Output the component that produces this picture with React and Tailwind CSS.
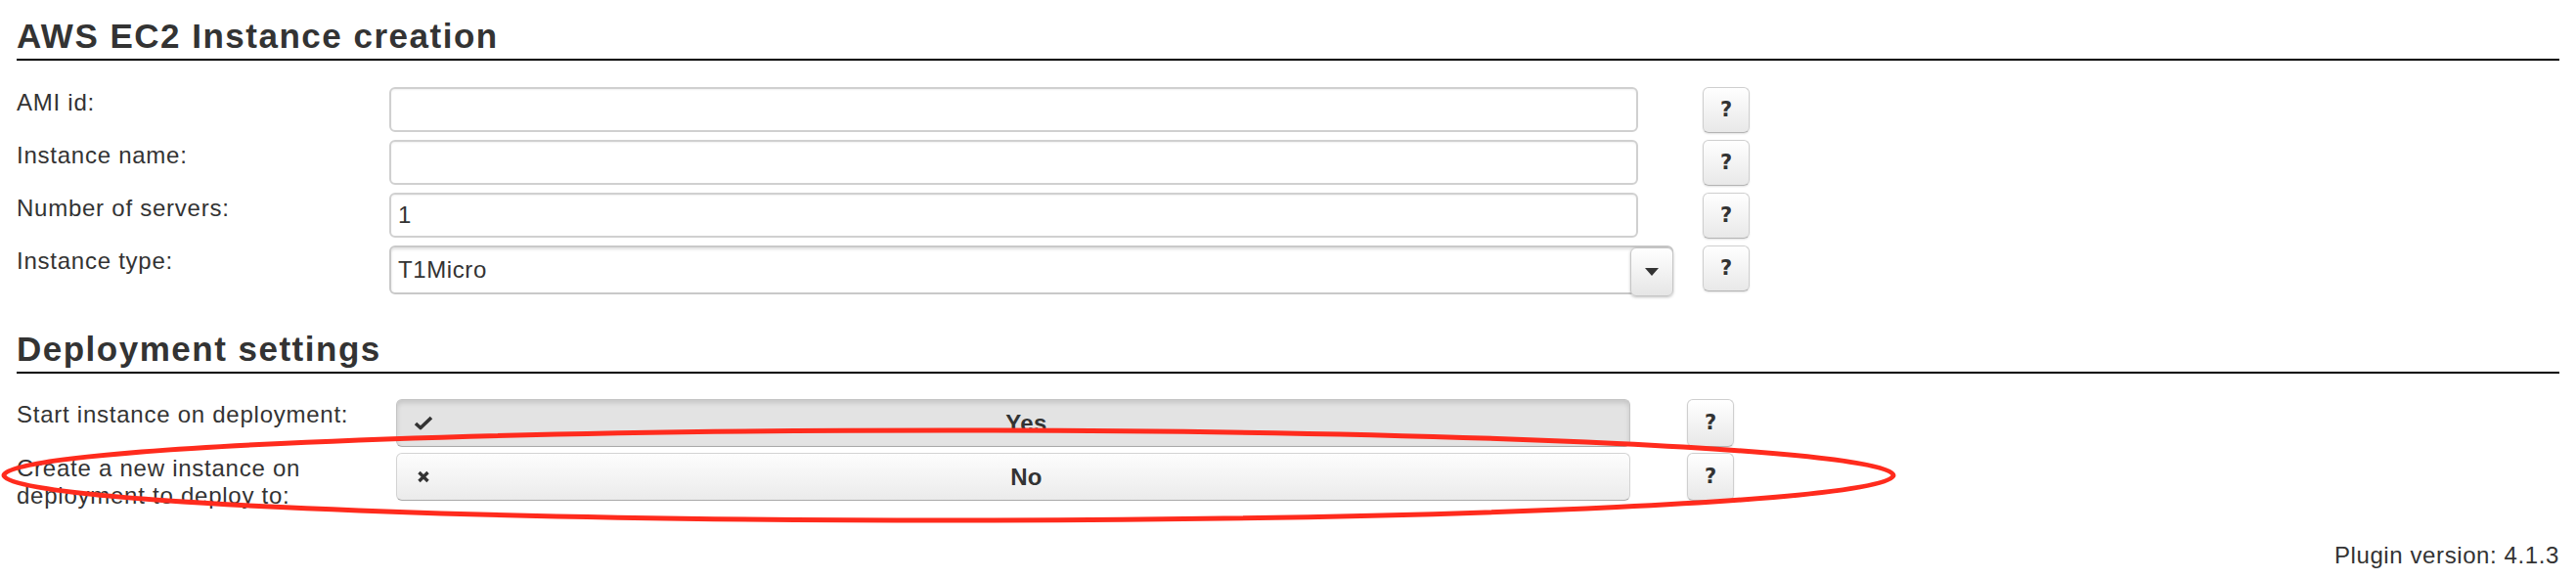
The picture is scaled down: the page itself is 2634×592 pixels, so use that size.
import React from 'react';

const HelpButton = ({ tall }) => (
  <button
    type="button"
    className={`${tall ? 'h-[49px]' : 'h-[47px]'} w-[48px] shrink-0 rounded-[6px] border border-[#cfcfcf] border-b-[#b4b4b4] bg-linear-to-b from-white to-[#e8e8e8] shadow-[0_1px_2px_rgba(0,0,0,0.12)] font-['DejaVu_Sans',sans-serif] text-[21px] font-bold leading-none text-[#333]`}
  >
    ?
  </button>
);

const TextField = ({ value }) => (
  <input
    type="text"
    defaultValue={value}
    className="h-[46px] w-[1277px] shrink-0 rounded-[6px] border-2 border-[#d0d0d0] bg-white pl-[7px] text-[24px] tracking-[0.6px] text-[#333] shadow-[inset_0_1px_2px_rgba(0,0,0,0.06)] outline-none"
  />
);

const Label = ({ children, width }) => (
  <label className={`${width === 'wide' ? 'w-[388px]' : 'w-[381px]'} shrink-0 pt-[2px] text-[24px] leading-[28px] tracking-[0.75px]`}>
    {children}
  </label>
);

const CheckIcon = () => (
  <svg width="20" height="15" viewBox="0 0 20 15">
    <path d="M2 8 L7 12.5 L18 2" fill="none" stroke="#333" strokeWidth="3.6" strokeLinejoin="round" />
  </svg>
);

const CloseIcon = () => (
  <svg width="14" height="13" viewBox="0 0 14 13">
    <path d="M2.5 2 L11.5 11 M11.5 2 L2.5 11" fill="none" stroke="#333" strokeWidth="3.4" />
  </svg>
);

const ToggleButton = ({ active, label }) => (
  <button
    type="button"
    className={
      active
        ? 'flex h-[49px] w-[1262px] shrink-0 items-center rounded-[6px] border border-[#c4c4c4] border-b-[#a9a9a9] bg-[#e3e3e3] pl-[17px] pr-[10px] shadow-[inset_0_3px_5px_rgba(0,0,0,0.13)]'
        : 'flex h-[49px] w-[1262px] shrink-0 items-center rounded-[6px] border border-[#d3d3d3] border-b-[#a9a9a9] bg-linear-to-b from-[#fdfdfd] to-[#ebebeb] pl-[17px] pr-[10px]'
    }
  >
    <span className="flex w-[20px] justify-center">{active ? <CheckIcon /> : <CloseIcon />}</span>
    <span className="flex-1 text-center text-[24px] font-bold tracking-[0.3px] text-[#333]">{label}</span>
  </button>
);

const SectionTitle = ({ children, className }) => (
  <h2 className={`${className} border-b-2 border-black pb-[3px] text-[35px] font-bold leading-[40px] tracking-[1.5px] text-[#333]`}>
    {children}
  </h2>
);

export default function App() {
  return (
    <div className="relative h-[592px] overflow-hidden bg-white px-[17px] pt-[17px] font-['Liberation_Sans',Arial,sans-serif] text-[#333]">
      <SectionTitle className="mt-0">AWS EC2 Instance creation</SectionTitle>

      <div className="mt-[27px] flex flex-col gap-[8px]">
        <div className="flex h-[46px] items-start">
          <Label>AMI id:</Label>
          <TextField value="" />
          <div className="ml-[66px]"><HelpButton /></div>
        </div>
        <div className="flex h-[46px] items-start">
          <Label>Instance name:</Label>
          <TextField value="" />
          <div className="ml-[66px]"><HelpButton /></div>
        </div>
        <div className="flex h-[46px] items-start">
          <Label>Number of servers:</Label>
          <TextField value="1" />
          <div className="ml-[66px]"><HelpButton /></div>
        </div>
        <div className="flex h-[50px] items-start">
          <Label>Instance type:</Label>
          <div className="flex h-[50px] w-[1313px] shrink-0 items-stretch rounded-[6px] border-2 border-[#c9c9c9] bg-white shadow-[inset_0_2px_3px_rgba(0,0,0,0.12)]">
            <div className="flex flex-1 items-center pl-[7px] text-[24px] tracking-[0.6px]">T1Micro</div>
            <div className="-mr-[2px] flex h-[50px] w-[44px] items-center justify-center rounded-[6px] border border-[#c6c6c6] bg-linear-to-b from-white to-[#e6e6e6] shadow-[0_1px_3px_rgba(0,0,0,0.25)]">
              <svg width="14" height="8" viewBox="0 0 14 8">
                <path d="M0 0 H14 L7 8 Z" fill="#333" />
              </svg>
            </div>
          </div>
          <div className="ml-[30px]"><HelpButton /></div>
        </div>
      </div>

      <SectionTitle className="mt-[36px]">Deployment settings</SectionTitle>

      <div className="mt-[26px] flex flex-col gap-[6px]">
        <div className="flex items-start">
          <Label width="wide">Start instance on deployment:</Label>
          <ToggleButton active label="Yes" />
          <div className="ml-[58px]"><HelpButton tall /></div>
        </div>
        <div className="flex items-start">
          <Label width="wide">Create a new instance on deployment to deploy to:</Label>
          <ToggleButton active={false} label="No" />
          <div className="ml-[58px]"><HelpButton tall /></div>
        </div>
      </div>

      <div className="mt-[33px] text-right text-[24px] leading-[28px] tracking-[0.6px]">Plugin version: 4.1.3</div>

      {/* red annotation drawn over the screenshot */}
      <svg className="pointer-events-none absolute left-0 top-0" width="2634" height="592" viewBox="0 0 2634 592">
        <ellipse cx="970" cy="486" rx="966" ry="46" fill="none" stroke="#ff2b1d" strokeWidth="5" />
      </svg>
    </div>
  );
}
